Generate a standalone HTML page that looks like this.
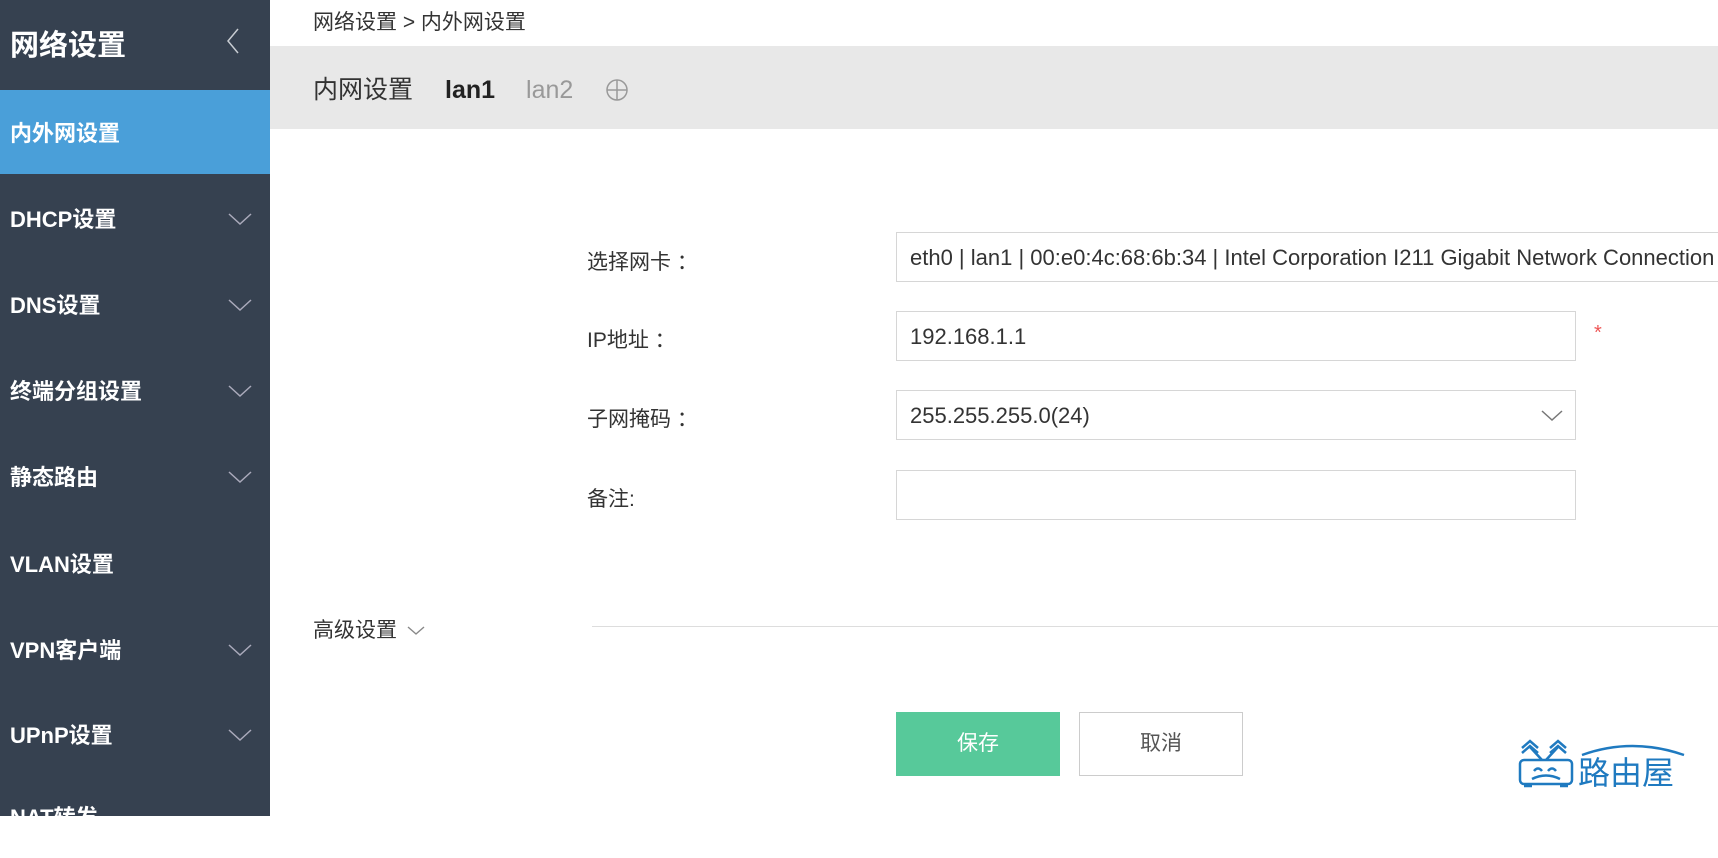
<!DOCTYPE html>
<html><head><meta charset="utf-8"><style>
*{margin:0;padding:0;box-sizing:border-box}
body{width:1718px;height:816px;overflow:hidden;background:#fff;font-family:"Liberation Sans","Noto Sans CJK SC",sans-serif;position:relative;color:#333}
.sb{position:absolute;left:0;top:0;width:270px;height:816px;background:#364150}
.sb .t{position:absolute;left:10px;top:22px;font-size:29px;color:#fff;font-weight:bold}
.sb .back{position:absolute;left:226px;top:28px;width:14px;height:26px}
.item{position:absolute;left:0;width:270px;height:84px;color:#fff;font-size:22px;padding-left:10px;display:flex;align-items:center;font-weight:bold}
.item.act{background:#4a9fd9}
.item svg{position:absolute;right:18px;top:36px}
.bc{position:absolute;left:313px;top:6px;font-size:21px;color:#333}
.bar{position:absolute;left:270px;top:46px;width:1448px;height:83px;background:#e8e8e8;display:flex;align-items:baseline;padding-left:43px;padding-top:24px;font-size:25px}
.lbl{position:absolute;left:587px;font-size:21px;color:#333}
.inp{position:absolute;left:896px;width:680px;height:50px;border:1px solid #d6d6d6;font-size:22px;padding-left:13px;line-height:50px;color:#333;white-space:nowrap;overflow:hidden}
.btn{position:absolute;top:712px;height:64px;width:164px;font-size:21px;text-align:center;line-height:64px}
</style></head><body>
<div class="sb">
<div class="t">网络设置</div>
<svg class="back" viewBox="0 0 14 26"><path d="M12 1L2 13L12 25" stroke="#c8ccd2" stroke-width="1.5" fill="none"/></svg>
<div class="item act" style="top:90px">内外网设置</div>
<div class="item" style="top:176px">DHCP设置<svg width="24" height="14"><path d="M1 2L12 12L23 2" stroke="#aab" stroke-width="1.5" fill="none"/></svg></div>
<div class="item" style="top:262px">DNS设置<svg width="24" height="14"><path d="M1 2L12 12L23 2" stroke="#aab" stroke-width="1.5" fill="none"/></svg></div>
<div class="item" style="top:348px">终端分组设置<svg width="24" height="14"><path d="M1 2L12 12L23 2" stroke="#aab" stroke-width="1.5" fill="none"/></svg></div>
<div class="item" style="top:434px">静态路由<svg width="24" height="14"><path d="M1 2L12 12L23 2" stroke="#aab" stroke-width="1.5" fill="none"/></svg></div>
<div class="item" style="top:521px">VLAN设置</div>
<div class="item" style="top:607px">VPN客户端<svg width="24" height="14"><path d="M1 2L12 12L23 2" stroke="#aab" stroke-width="1.5" fill="none"/></svg></div>
<div class="item" style="top:692px">UPnP设置<svg width="24" height="14"><path d="M1 2L12 12L23 2" stroke="#aab" stroke-width="1.5" fill="none"/></svg></div>
<div class="item" style="top:774px">NAT转发</div>
</div>
<div class="bc">网络设置 &gt; 内外网设置</div>
<div class="bar">
<span style="color:#333">内网设置</span>
<span style="margin-left:32px;font-weight:bold;color:#222">lan1</span>
<span style="margin-left:31px;color:#999">lan2</span>
<svg style="margin-left:32px;position:relative;top:4px" width="24" height="24"><circle cx="12" cy="12" r="10" stroke="#999" stroke-width="1.5" fill="none"/><path d="M2 12H22M12 2V22" stroke="#999" stroke-width="1.5"/></svg>
</div>
<div class="lbl" style="top:246px">选择网卡 ：</div>
<div class="inp" style="top:232px;width:822px;border-right:none">eth0 | lan1 | 00:e0:4c:68:6b:34 | Intel Corporation I211 Gigabit Network Connection</div>
<div class="lbl" style="top:324px">IP地址 ：</div>
<div class="inp" style="top:311px">192.168.1.1</div>
<div style="position:absolute;left:1594px;top:322px;color:#e55;font-size:20px">*</div>
<div class="lbl" style="top:403px">子网掩码 ：</div>
<div class="inp" style="top:390px">255.255.255.0(24)<svg style="position:absolute;right:12px;top:19px" width="22" height="12"><path d="M1 1L11 10L21 1" stroke="#777" stroke-width="1.5" fill="none"/></svg></div>
<div class="lbl" style="top:483px">备注:</div>
<div class="inp" style="top:470px"></div>
<div style="position:absolute;left:313px;top:614px;font-size:21px">高级设置 <svg width="18" height="10" style="margin-left:4px;vertical-align:middle"><path d="M1 1L9 8L17 1" stroke="#888" stroke-width="1.4" fill="none"/></svg></div>
<div style="position:absolute;left:592px;top:626px;width:1126px;height:1px;background:#ddd"></div>
<div class="btn" style="left:896px;background:#57c99a;color:#fff">保存</div>
<div class="btn" style="left:1079px;border:1px solid #ccc;color:#555;line-height:62px">取消</div>
<svg style="position:absolute;left:1516px;top:734px" width="175" height="58" viewBox="0 0 175 58">
<g stroke="#1f7ac0" stroke-width="2.5" fill="none">
<path d="M6 14L14 7L22 14M6 19L14 12L22 19M14 13L26 26M34 14L42 7L50 14M34 19L42 12L50 19M42 13L30 26"/>
<rect x="4" y="26" width="52" height="24" rx="4"/>
<path d="M18 37q4-5 8 0M32 37q4-5 8 0M16 45q14-7 28 0M8 52h8M44 52h8"/>
<path d="M66 21q50-18 102 0"/>
</g>
<text x="62" y="50" font-size="32" fill="#1f7ac0" font-family="Noto Sans CJK SC,sans-serif">路由屋</text>
</svg>
</body></html>
